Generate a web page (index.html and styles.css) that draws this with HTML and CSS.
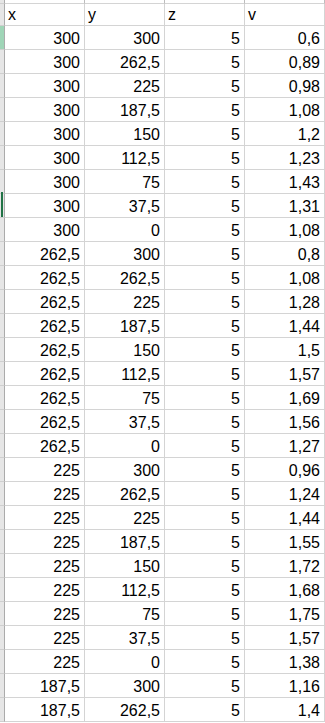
FILE: index.html
```html
<!DOCTYPE html>
<html>
<head>
<meta charset="utf-8">
<link rel="stylesheet" href="styles.css">
</head>
<body>
<div class="sheet">
  <div class="row top"><div class="hdr"></div><div class="c"></div><div class="c"></div><div class="c"></div><div class="c"></div></div>
  <div class="row head"><div class="hdr"></div><div class="c">x</div><div class="c">y</div><div class="c">z</div><div class="c">v</div></div>
  <div class="row"><div class="hdr sel"></div><div class="c">300</div><div class="c">300</div><div class="c">5</div><div class="c">0,6</div></div>
  <div class="row"><div class="hdr"></div><div class="c">300</div><div class="c">262,5</div><div class="c">5</div><div class="c">0,89</div></div>
  <div class="row"><div class="hdr"></div><div class="c">300</div><div class="c">225</div><div class="c">5</div><div class="c">0,98</div></div>
  <div class="row"><div class="hdr"></div><div class="c">300</div><div class="c">187,5</div><div class="c">5</div><div class="c">1,08</div></div>
  <div class="row"><div class="hdr"></div><div class="c">300</div><div class="c">150</div><div class="c">5</div><div class="c">1,2</div></div>
  <div class="row"><div class="hdr"></div><div class="c">300</div><div class="c">112,5</div><div class="c">5</div><div class="c">1,23</div></div>
  <div class="row"><div class="hdr"></div><div class="c">300</div><div class="c">75</div><div class="c">5</div><div class="c">1,43</div></div>
  <div class="row"><div class="hdr mark"></div><div class="c">300</div><div class="c">37,5</div><div class="c">5</div><div class="c">1,31</div></div>
  <div class="row"><div class="hdr"></div><div class="c">300</div><div class="c">0</div><div class="c">5</div><div class="c">1,08</div></div>
  <div class="row"><div class="hdr"></div><div class="c">262,5</div><div class="c">300</div><div class="c">5</div><div class="c">0,8</div></div>
  <div class="row"><div class="hdr"></div><div class="c">262,5</div><div class="c">262,5</div><div class="c">5</div><div class="c">1,08</div></div>
  <div class="row"><div class="hdr"></div><div class="c">262,5</div><div class="c">225</div><div class="c">5</div><div class="c">1,28</div></div>
  <div class="row"><div class="hdr"></div><div class="c">262,5</div><div class="c">187,5</div><div class="c">5</div><div class="c">1,44</div></div>
  <div class="row"><div class="hdr"></div><div class="c">262,5</div><div class="c">150</div><div class="c">5</div><div class="c">1,5</div></div>
  <div class="row"><div class="hdr"></div><div class="c">262,5</div><div class="c">112,5</div><div class="c">5</div><div class="c">1,57</div></div>
  <div class="row"><div class="hdr"></div><div class="c">262,5</div><div class="c">75</div><div class="c">5</div><div class="c">1,69</div></div>
  <div class="row"><div class="hdr"></div><div class="c">262,5</div><div class="c">37,5</div><div class="c">5</div><div class="c">1,56</div></div>
  <div class="row"><div class="hdr"></div><div class="c">262,5</div><div class="c">0</div><div class="c">5</div><div class="c">1,27</div></div>
  <div class="row"><div class="hdr"></div><div class="c">225</div><div class="c">300</div><div class="c">5</div><div class="c">0,96</div></div>
  <div class="row"><div class="hdr"></div><div class="c">225</div><div class="c">262,5</div><div class="c">5</div><div class="c">1,24</div></div>
  <div class="row"><div class="hdr"></div><div class="c">225</div><div class="c">225</div><div class="c">5</div><div class="c">1,44</div></div>
  <div class="row"><div class="hdr"></div><div class="c">225</div><div class="c">187,5</div><div class="c">5</div><div class="c">1,55</div></div>
  <div class="row"><div class="hdr"></div><div class="c">225</div><div class="c">150</div><div class="c">5</div><div class="c">1,72</div></div>
  <div class="row"><div class="hdr"></div><div class="c">225</div><div class="c">112,5</div><div class="c">5</div><div class="c">1,68</div></div>
  <div class="row"><div class="hdr"></div><div class="c">225</div><div class="c">75</div><div class="c">5</div><div class="c">1,75</div></div>
  <div class="row"><div class="hdr"></div><div class="c">225</div><div class="c">37,5</div><div class="c">5</div><div class="c">1,57</div></div>
  <div class="row"><div class="hdr"></div><div class="c">225</div><div class="c">0</div><div class="c">5</div><div class="c">1,38</div></div>
  <div class="row"><div class="hdr"></div><div class="c">187,5</div><div class="c">300</div><div class="c">5</div><div class="c">1,16</div></div>
  <div class="row"><div class="hdr"></div><div class="c">187,5</div><div class="c">262,5</div><div class="c">5</div><div class="c">1,4</div></div>
</div>
</body>
</html>
```
FILE: styles.css
```css
html, body {
  margin: 0;
  padding: 0;
  background: #ffffff;
}
.sheet {
  width: 325px;
  font-family: "Liberation Sans", Arial, sans-serif;
  font-size: 16px;
  color: #000000;
}
.row {
  display: grid;
  grid-template-columns: 5px 80px 80px 80px 80px;
  height: 24px;
}
.hdr {
  background: #e6e6e6;
  border-right: 1px solid #ababab;
  border-bottom: 1px solid #cfcfcf;
  position: relative;
}
.hdr.sel {
  background: #9fd5b7;
}
.hdr.mark::before {
  content: "";
  position: absolute;
  left: 1px;
  top: -2px;
  bottom: 0;
  width: 2px;
  background: #217346;
}
.c {
  border-right: 1px solid #d4d4d4;
  border-bottom: 1px solid #d4d4d4;
  text-align: right;
  padding: 3px 4px 0 0;
  line-height: 20px;
  white-space: nowrap;
  overflow: hidden;
}
.top {
  height: 4px;
}
.top .c {
  padding: 0;
  border-right-color: #bdbdbd;
}
.head {
  height: 22px;
}
.head .c {
  text-align: left;
  padding: 0 0 0 3px;
  line-height: 21px;
}
```
